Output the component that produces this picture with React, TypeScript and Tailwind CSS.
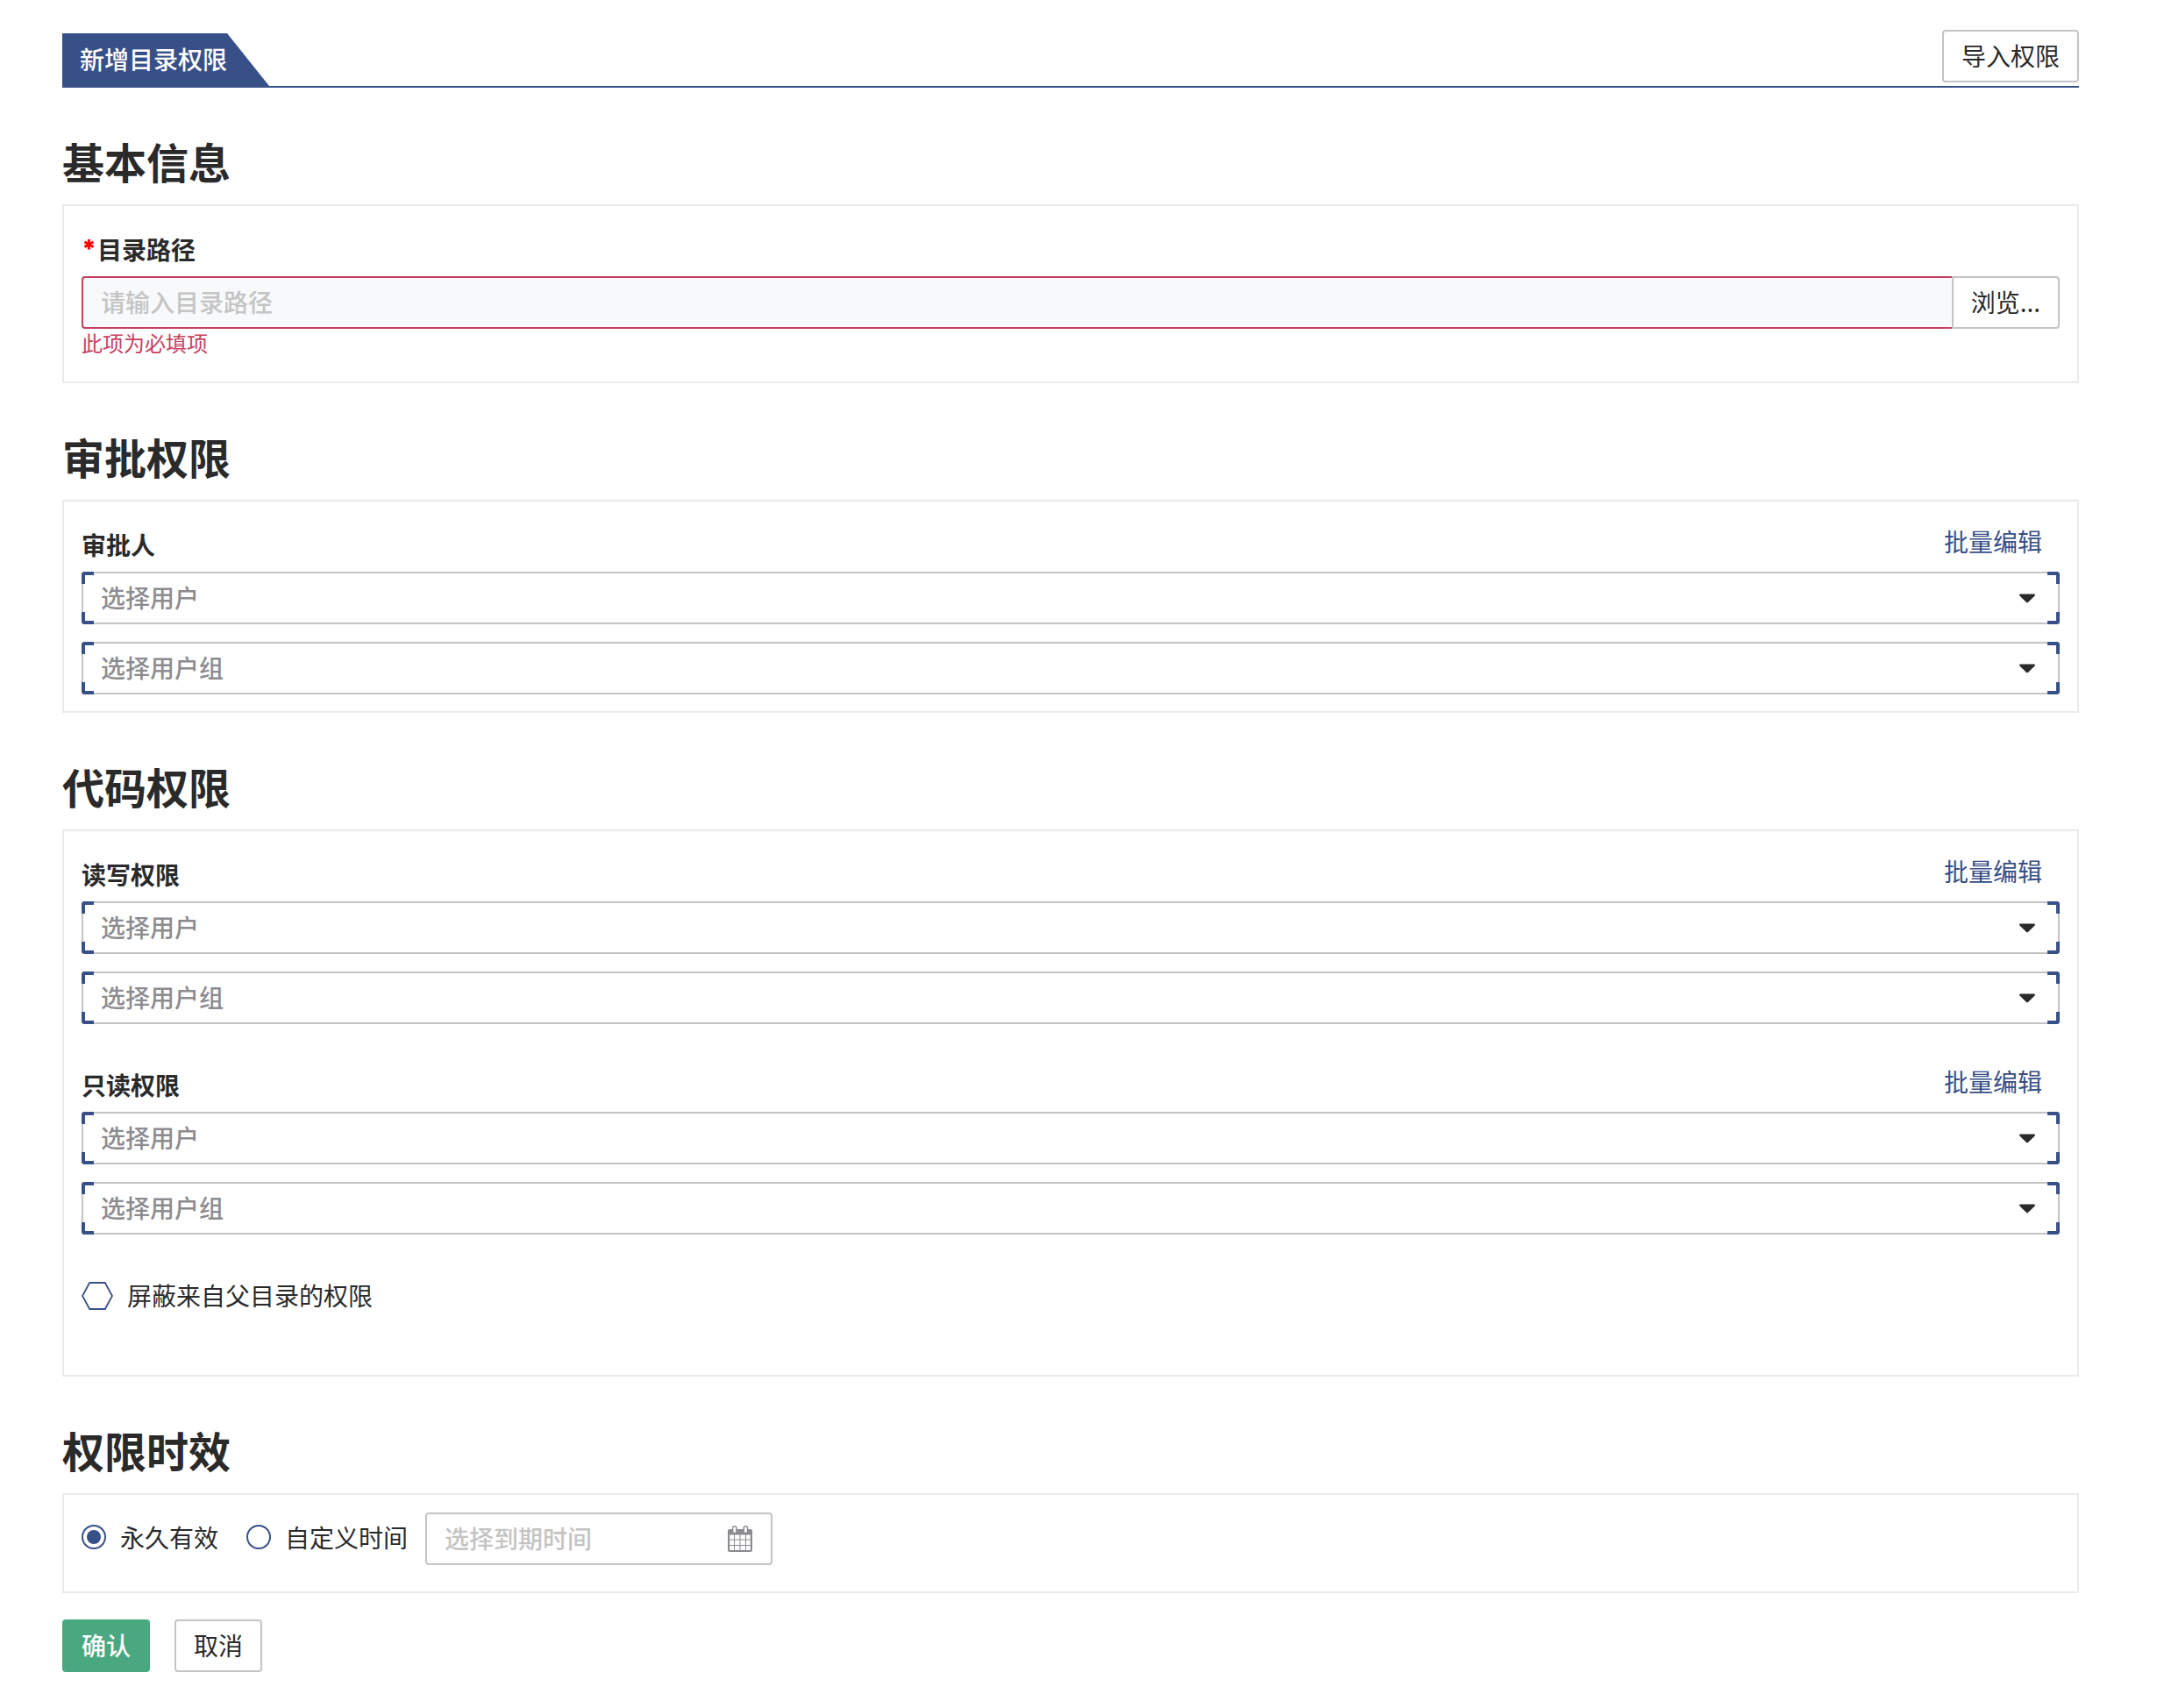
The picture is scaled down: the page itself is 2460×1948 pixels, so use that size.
import { useId, type ReactNode } from "react";

function OutlineButton({ children, className = "" }: { children: ReactNode; className?: string }) {
  return (
    <button
      type="button"
      className={`h-15 shrink-0 cursor-pointer border-2 border-[#c4c4c4] bg-white px-5 pb-0.5 text-[28px] leading-10 text-[#2a2a2b] ${className}`}
    >
      {children}
    </button>
  );
}

function Section({ title, className, children }: { title: string; className: string; children: ReactNode }) {
  return (
    <section>
      <h2 className="pt-12 pb-[15px] text-5xl leading-[70px] font-bold">{title}</h2>
      <div className={`border-2 border-[#ebebeb] px-5 pt-5 ${className}`}>{children}</div>
    </section>
  );
}

function PickerSelect({ placeholder, label }: { placeholder: string; label: string }) {
  return (
    <div className="relative">
      <select
        aria-label={label}
        defaultValue=""
        className="block h-15 w-full appearance-none rounded border-2 border-[#c4c4c4] bg-white px-5 pb-0.5 text-[28px] leading-10 font-medium text-[#8c8c90]"
      >
        <option value="">{placeholder}</option>
      </select>
      <svg className="pointer-events-none absolute top-6 right-7 h-3 w-[18px]" viewBox="0 0 18 12" aria-hidden="true">
        <path d="M1.200 1.500h15.600c1 0 1.500 1.200.8 1.900l-7.400 7.400c-.7.7-1.700.7-2.400 0L.4 3.400C-.3 2.700.2 1.500 1.200 1.500z" fill="#2a2a2b" />
      </svg>
      <span className="pointer-events-none absolute top-0 left-0 size-[14px] rounded-tl border-t-4 border-l-4 border-[#385088]" />
      <span className="pointer-events-none absolute top-0 right-0 size-[14px] rounded-tr border-t-4 border-r-4 border-[#385088]" />
      <span className="pointer-events-none absolute bottom-0 left-0 size-[14px] rounded-bl border-b-4 border-l-4 border-[#385088]" />
      <span className="pointer-events-none absolute right-0 bottom-0 size-[14px] rounded-br border-r-4 border-b-4 border-[#385088]" />
    </div>
  );
}

function PermissionGroup({ label }: { label: string }) {
  return (
    <div role="group" aria-label={label}>
      <div className="flex h-15 items-start justify-between">
        <h3 className="text-[28px] leading-[58px] font-bold">{label}</h3>
        <button type="button" className="cursor-pointer px-5 text-[28px] leading-[50px] text-[#385088]">
          批量编辑
        </button>
      </div>
      <div className="flex flex-col gap-5">
        <PickerSelect label={`${label} 用户`} placeholder="选择用户" />
        <PickerSelect label={`${label} 用户组`} placeholder="选择用户组" />
      </div>
    </div>
  );
}

function ValidityRadio({ label, checked }: { label: string; checked?: boolean }) {
  return (
    <label className="flex h-15 cursor-pointer items-center gap-4 pb-1 text-[28px] leading-10">
      <input
        type="radio"
        name="validity"
        defaultChecked={checked}
        className="size-7 appearance-none rounded-full border-2 border-[#385088] bg-white bg-clip-content p-1 checked:bg-[#385088]"
      />
      {label}
    </label>
  );
}

function CalendarIcon() {
  return (
    <svg className="pointer-events-none absolute top-[15px] right-[23px] h-[30px] w-7" viewBox="0 0 28 30" aria-hidden="true">
      <rect x="0" y="4" width="28" height="26" rx="2" fill="#8c8c90" />
      <g fill="#fff">
        <path d="M2.200 10.500h4.800v5H2.200zM8 10.500h5.500v5H8zM14.500 10.500h5.500v5h-5.500zM21 10.500h4.800v5H21z" />
        <path d="M2.200 16.500h4.800v5.500H2.200zM8 16.500h5.500v5.500H8zM14.500 16.500h5.500v5.500h-5.500zM21 16.500h4.800v5.500H21z" />
        <path d="M2.200 23h4.800v5H2.200zM8 23h5.500v5H8zM14.500 23h5.500v5h-5.500zM21 23h4.800v5H21z" />
      </g>
      <rect x="5" y="0" width="5.600" height="9" rx="2.600" fill="#8c8c90" />
      <rect x="17.600" y="0" width="5.600" height="9" rx="2.600" fill="#8c8c90" />
      <rect x="6.400" y="1.400" width="2.800" height="6.400" rx="1" fill="#fff" />
      <rect x="19" y="1.400" width="2.800" height="6.400" rx="1" fill="#fff" />
    </svg>
  );
}

export default function App() {
  const pathId = useId();
  return (
    <main className="min-h-screen bg-white pt-[34px] pr-[89px] pb-10 pl-[71px] font-['Noto_Sans_CJK_SC',sans-serif] text-[#2a2a2b]">
      <header className="flex items-start justify-between border-b-2 border-[#385088]">
        <div className="flex items-stretch self-end">
          <h1 className="h-15 bg-[#385088] pl-5 text-[28px] leading-[58px] font-medium text-white">新增目录权限</h1>
          <svg className="h-15 w-12" viewBox="0 0 48 60" aria-hidden="true">
            <path d="M0 0 48 60H0z" fill="#385088" />
          </svg>
        </div>
        <div className="pb-1">
          <OutlineButton className="block rounded">导入权限</OutlineButton>
        </div>
      </header>

      <Section title="基本信息" className="pb-7">
        <label htmlFor={pathId} className="flex h-15 gap-px text-[28px] leading-[58px] font-bold">
          <span className="font-['Inter',sans-serif] font-black text-[#ff0000]">*</span>目录路径
        </label>
        <div className="flex">
          <input
            id={pathId}
            type="text"
            placeholder="请输入目录路径"
            className="h-15 min-w-0 flex-1 rounded-l border-2 border-r-0 border-[#c84060] bg-[#f8f9fb] px-5 pb-0.5 text-[28px] leading-10 placeholder:font-medium placeholder:text-[#c4c4c4]"
          />
          <OutlineButton className="rounded-r">浏览...</OutlineButton>
        </div>
        <p className="text-2xl text-[#c84060]">此项为必填项</p>
      </Section>

      <Section title="审批权限" className="pb-[19px]">
        <PermissionGroup label="审批人" />
      </Section>

      <Section title="代码权限" className="pb-15">
        <div className="flex flex-col gap-10">
          <PermissionGroup label="读写权限" />
          <PermissionGroup label="只读权限" />
          <label className="flex h-15 cursor-pointer items-center gap-4 self-start text-[28px] leading-10">
            <input type="checkbox" className="peer sr-only" />
            <svg
              className="h-8 w-9 fill-white peer-checked:fill-[#385088]"
              viewBox="0 0 36 32"
              aria-hidden="true"
            >
              <path d="M9.200 1h17.600L35 16l-8.200 15H9.200L1 16z" stroke="#385088" strokeWidth="1.800" />
            </svg>
            <span className="pb-0.5">屏蔽来自父目录的权限</span>
          </label>
        </div>
      </Section>

      <Section title="权限时效" className="pb-[30px]">
        <div className="flex items-center">
          <div className="flex gap-8">
            <ValidityRadio label="永久有效" checked />
            <ValidityRadio label="自定义时间" />
          </div>
          <div className="relative ml-5 w-[396px]">
            <input
              type="text"
              aria-label="到期时间"
              placeholder="选择到期时间"
              className="block h-15 w-full rounded border-2 border-[#c4c4c4] bg-white px-5 pb-0.5 text-[28px] leading-10 placeholder:font-medium placeholder:text-[#c4c4c4]"
            />
            <CalendarIcon />
          </div>
        </div>
      </Section>

      <div className="flex gap-7 pt-[30px]">
        <button type="submit" className="h-15 cursor-pointer rounded bg-[#4aa881] px-[22px] pb-0.5 text-[28px] leading-10 font-medium text-white">
          确认
        </button>
        <OutlineButton className="rounded">取消</OutlineButton>
      </div>
    </main>
  );
}
